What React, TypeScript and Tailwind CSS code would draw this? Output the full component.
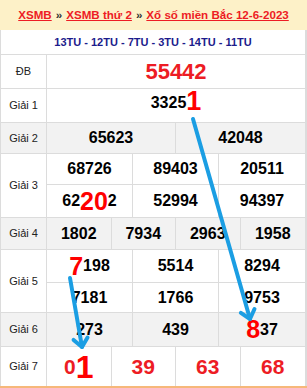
import React from 'react';

const BLUE = '#1b9ee3';

// arrow from (x1,y1) to the tip (x2,y2), with a V head
const Arrow = ({ x1, y1, x2, y2 }: { x1: number; y1: number; x2: number; y2: number }) => {
  const len = Math.hypot(x2 - x1, y2 - y1);
  const bx = (x1 - x2) / len;
  const by = (y1 - y2) / len;
  const head = 11;
  const a = (40 * Math.PI) / 180;
  const lx = x2 + head * (bx * Math.cos(a) - by * Math.sin(a));
  const ly = y2 + head * (bx * Math.sin(a) + by * Math.cos(a));
  const rx = x2 + head * (bx * Math.cos(-a) - by * Math.sin(-a));
  const ry = y2 + head * (bx * Math.sin(-a) + by * Math.cos(-a));
  return (
    <g stroke={BLUE} strokeWidth={4} strokeLinecap="round" strokeLinejoin="round" fill="none">
      <line x1={x1} y1={y1} x2={x2} y2={y2} />
      <polyline points={`${lx},${ly} ${x2},${y2} ${rx},${ry}`} />
    </g>
  );
};

const Label = ({ text }: { text: string }) => (
  <div className="w-[46px] shrink-0 border-r border-[#dcdcdc] flex items-center justify-center text-[11px] text-[#222]">
    {text}
  </div>
);

const Big = ({ children, size = 'text-[25px]' }: { children: React.ReactNode; size?: string }) => (
  <span className={`${size} text-[#ff0000] leading-none`}>{children}</span>
);

const Cells = ({ items, cols, h, last = false }: { items: React.ReactNode[]; cols: string; h: string; last?: boolean }) => (
  <div className={`grid ${cols} ${h} ${last ? '' : 'border-b border-[#dcdcdc]'}`}>
    {items.map((it, i) => (
      <div
        key={i}
        className={`flex items-center justify-center text-[16px] font-bold text-black ${i < items.length - 1 ? 'border-r border-[#dcdcdc]' : ''}`}
      >
        {it}
      </div>
    ))}
  </div>
);

export default function App() {
  return (
    <div className="relative w-[307px] h-[388px] bg-white font-['Liberation_Sans',Arial,sans-serif]">
      {/* header */}
      <div className="h-[30px] bg-[#fdf1c8] flex items-center justify-center text-[11.6px] font-bold">
        <span className="text-[#ed1c24] underline">XSMB</span>
        <span className="text-[#333] mx-[4px]">»</span>
        <span className="text-[#ed1c24] underline">XSMB thứ 2</span>
        <span className="text-[#333] mx-[4px]">»</span>
        <span className="text-[#ed1c24] underline">Xổ số miền Bắc 12-6-2023</span>
      </div>

      <div className="border-x border-[#dcdcdc] border-r-[2px]">
        <div className="h-[25px] flex items-center justify-center border-b border-[#dcdcdc] text-[11px] font-bold text-[#1c1c8c]">
          13TU - 12TU - 7TU - 3TU - 14TU - 11TU
        </div>

        {/* ĐB */}
        <div className="flex h-[34px] border-b border-[#dcdcdc]">
          <Label text="ĐB" />
          <div className="flex-1 flex items-center justify-center text-[22px] font-bold text-[#ed1c24]">55442</div>
        </div>

        {/* Giải 1 */}
        <div className="flex h-[34px] border-b border-[#dcdcdc]">
          <Label text="Giải 1" />
          <div className="flex-1 flex items-end justify-center pb-[7px] text-[16px] font-bold text-black">
            3325<Big size="text-[27px]">1</Big>
          </div>
        </div>

        {/* Giải 2 */}
        <div className="flex h-[31px] border-b border-[#dcdcdc] bg-[#f2f2f2]">
          <Label text="Giải 2" />
          <div className="flex-1">
            <Cells items={['65623', '42048']} cols="grid-cols-2" h="h-full" last />
          </div>
        </div>

        {/* Giải 3 */}
        <div className="flex h-[64px] border-b border-[#dcdcdc]">
          <Label text="Giải 3" />
          <div className="flex-1 flex flex-col">
            <Cells items={['68726', '89403', '20511']} cols="grid-cols-3" h="h-[31px]" />
            <Cells
              items={[
                <span key="a" className="flex items-center">62<Big>20</Big>2</span>,
                '52994',
                '94397',
              ]}
              cols="grid-cols-3"
              h="flex-1"
              last
            />
          </div>
        </div>

        {/* Giải 4 */}
        <div className="flex h-[32px] border-b border-[#dcdcdc] bg-[#f2f2f2]">
          <Label text="Giải 4" />
          <div className="flex-1">
            <Cells items={['1802', '7934', '2963', '1958']} cols="grid-cols-4" h="h-full" last />
          </div>
        </div>

        {/* Giải 5 */}
        <div className="flex h-[63px] border-b border-[#dcdcdc]">
          <Label text="Giải 5" />
          <div className="flex-1 flex flex-col">
            <Cells
              items={[
                <span key="a" className="flex items-center"><Big>7</Big>198</span>,
                '5514',
                '8294',
              ]}
              cols="grid-cols-3"
              h="h-[33px]"
            />
            <Cells items={['7181', '1766', '9753']} cols="grid-cols-3" h="flex-1" last />
          </div>
        </div>

        {/* Giải 6 */}
        <div className="flex h-[34px] border-b border-[#dcdcdc] bg-[#f2f2f2]">
          <Label text="Giải 6" />
          <div className="flex-1">
            <Cells
              items={[
                '273',
                '439',
                <span key="c" className="flex items-center"><Big>8</Big>37</span>,
              ]}
              cols="grid-cols-3"
              h="h-full"
              last
            />
          </div>
        </div>

        {/* Giải 7 */}
        <div className="flex h-[39px]">
          <Label text="Giải 7" />
          <div className="flex-1 grid grid-cols-4 text-[21px] font-bold text-[#ed1c24]">
            <div className="flex items-center justify-center border-r border-[#dcdcdc]">
              0<span className="text-[32px] text-[#ff0000] leading-none">1</span>
            </div>
            <div className="flex items-center justify-center border-r border-[#dcdcdc]">39</div>
            <div className="flex items-center justify-center border-r border-[#dcdcdc]">63</div>
            <div className="flex items-center justify-center">68</div>
          </div>
        </div>
      </div>
      <div className="h-[2px] bg-[#f6b87a]" />

      <svg className="absolute inset-0 pointer-events-none" width={307} height={388}>
        <Arrow x1={193} y1={119} x2={250} y2={319} />
        <Arrow x1={70} y1={278} x2={82} y2={347} />
      </svg>
    </div>
  );
}
